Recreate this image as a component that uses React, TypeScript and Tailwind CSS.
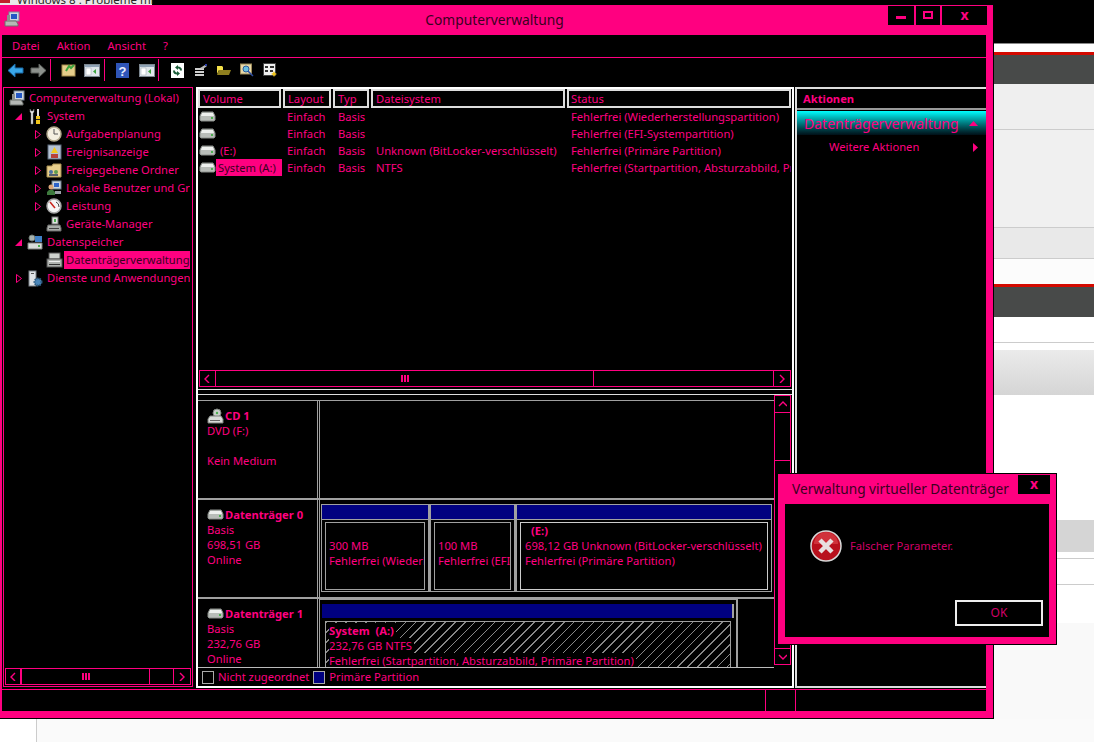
import type { ReactNode } from "react";

const font = { fontFamily: '"Noto Sans", sans-serif' };

// small hand drawn mmc icons
function DriveIcon() {
  return (
    <svg width="17" height="11" viewBox="0 0 17 11" className="shrink-0">
      <path d="M3 1h11l2 4v4l-1 1H2L1 9V5z" fill="#b9bdb9" stroke="#8a8e8a" />
      <path d="M3 2h11l1 3H2z" fill="#eef0ee" />
      <rect x="12" y="6" width="2" height="2" fill="#4caf50" />
    </svg>
  );
}

function ComputerIcon() {
  return (
    <svg width="16" height="16" viewBox="0 0 16 16" className="shrink-0">
      <rect x="5" y="1" width="10" height="9" fill="#cdd6e0" stroke="#7b8794" />
      <rect x="7" y="3" width="6" height="5" fill="#2457c5" />
      <path d="M1 10h11l2 3v2H1z" fill="#b5b8b5" stroke="#6d706d" />
      <rect x="3" y="4" width="3" height="6" fill="#8b8f8b" />
    </svg>
  );
}

function ToolsIcon() {
  return (
    <svg width="16" height="17" viewBox="0 0 16 17" className="shrink-0">
      <path d="M3 1v3l1 1v11h2V5l1-1V1L6 3H4z" fill="#e6e6e6" stroke="#777" strokeWidth="0.5" />
      <rect x="10" y="1" width="2" height="7" fill="#ddd" />
      <rect x="9" y="8" width="4" height="8" fill="#f0c419" />
      <rect x="9" y="11" width="4" height="1" fill="#222" />
    </svg>
  );
}

function ClockIcon() {
  return (
    <svg width="16" height="16" viewBox="0 0 16 16" className="shrink-0">
      <circle cx="8" cy="8" r="7" fill="#f4efe0" stroke="#b0a88c" strokeWidth="1.5" />
      <path d="M8 3v5h4" fill="none" stroke="#555" />
    </svg>
  );
}

function EventIcon() {
  return (
    <svg width="15" height="16" viewBox="0 0 15 16" className="shrink-0">
      <rect x="1" y="1" width="13" height="14" fill="#b4c2d4" stroke="#5d6b7d" />
      <path d="M7.5 3l3.5 6H4z" fill="#f2c81e" />
      <rect x="4" y="10" width="7" height="4" fill="#b8413a" />
    </svg>
  );
}

function ShareIcon() {
  return (
    <svg width="16" height="15" viewBox="0 0 16 15" className="shrink-0">
      <path d="M1 3h5l1-2h8v13H1z" fill="#e8cf8c" stroke="#a88f50" />
      <circle cx="5" cy="9" r="2" fill="#4a6fa5" />
      <circle cx="10" cy="9" r="2" fill="#5e9c4e" />
      <rect x="3" y="11" width="9" height="2" fill="#55606b" />
    </svg>
  );
}

function UsersIcon() {
  return (
    <svg width="16" height="16" viewBox="0 0 16 16" className="shrink-0">
      <rect x="6" y="1" width="9" height="8" fill="#c9d4e0" stroke="#6d7a88" />
      <rect x="8" y="3" width="5" height="4" fill="#2d62c9" />
      <circle cx="5" cy="7" r="2.5" fill="#d9a679" />
      <path d="M1 15v-3l2-2h4l2 2v3z" fill="#3d7a3d" />
      <rect x="9" y="11" width="6" height="3" fill="#9aa1a8" />
    </svg>
  );
}

function GaugeIcon() {
  return (
    <svg width="16" height="16" viewBox="0 0 16 16" className="shrink-0">
      <circle cx="8" cy="8" r="7" fill="#f5f5f5" stroke="#a5a5a5" strokeWidth="1.5" />
      <path d="M4 4l5 6" stroke="#c8241c" strokeWidth="1.5" />
      <path d="M10 4a5 5 0 0 1 3 5" stroke="#444" fill="none" />
    </svg>
  );
}

function DeviceIcon() {
  return (
    <svg width="16" height="16" viewBox="0 0 16 16" className="shrink-0">
      <rect x="6" y="1" width="6" height="7" fill="#dfe3df" stroke="#777" />
      <rect x="8" y="3" width="2" height="3" fill="#4caf50" />
      <path d="M2 9h12l1 3v3H1v-3z" fill="#a9aca9" stroke="#666" />
      <rect x="3" y="12" width="10" height="1" fill="#444" />
    </svg>
  );
}

function StorageIcon() {
  return (
    <svg width="16" height="16" viewBox="0 0 16 16" className="shrink-0">
      <circle cx="5" cy="4" r="3" fill="#a8b2ad" stroke="#6f7a75" />
      <rect x="8" y="2" width="7" height="6" fill="#3f80c6" />
      <path d="M1 9h14v6H1z" fill="#d8dcd8" stroke="#7c807c" />
      <rect x="11" y="11" width="2" height="2" fill="#4caf50" />
    </svg>
  );
}

function DiskMgmtIcon() {
  return (
    <svg width="17" height="16" viewBox="0 0 17 16" className="shrink-0">
      <rect x="3" y="1" width="11" height="6" fill="#cfd3cf" stroke="#555" />
      <rect x="1" y="7" width="15" height="8" fill="#aeb2ae" stroke="#555" />
      <rect x="3" y="9" width="11" height="1" fill="#eee" />
      <rect x="3" y="12" width="11" height="1" fill="#333" />
    </svg>
  );
}

function ServicesIcon() {
  return (
    <svg width="16" height="17" viewBox="0 0 16 17" className="shrink-0">
      <rect x="2" y="1" width="7" height="15" fill="#dfe3e6" stroke="#7b8288" />
      <rect x="4" y="3" width="3" height="1" fill="#555" />
      <circle cx="11" cy="12" r="3.5" fill="#4a86b8" stroke="#2d5c82" strokeDasharray="1.5 1" strokeWidth="2" />
    </svg>
  );
}

function CdIcon() {
  return (
    <svg width="17" height="16" viewBox="0 0 17 16" className="shrink-0">
      <circle cx="10" cy="5" r="4" fill="#c9cfc9" stroke="#7d827d" />
      <circle cx="10" cy="5" r="1.2" fill="#4caf50" />
      <path d="M3 8h11l2 3v4H1v-4z" fill="#d8dbd8" stroke="#7c807c" />
      <rect x="3" y="12" width="10" height="1" fill="#666" />
    </svg>
  );
}

function BackIcon() {
  return (
    <svg width="17" height="15" viewBox="0 0 17 15">
      <path d="M8 1L1 7.5 8 14v-4h8V5H8z" fill="#39a6e8" stroke="#1a6aa8" />
    </svg>
  );
}

function ForwardIcon() {
  return (
    <svg width="17" height="15" viewBox="0 0 17 15">
      <path d="M9 1l7 6.5L9 14v-4H1V5h8z" fill="#8d918d" stroke="#5f625f" />
    </svg>
  );
}

function FolderUpIcon() {
  return (
    <svg width="15" height="14" viewBox="0 0 15 14">
      <rect x="1" y="2" width="13" height="11" fill="#e6cd8a" stroke="#a58c4c" />
      <path d="M5 8l3-5 2 2 3-3" fill="none" stroke="#3da33d" strokeWidth="2" />
    </svg>
  );
}

function PanelIcon({ accent }: { accent: string }) {
  return (
    <svg width="16" height="13" viewBox="0 0 16 13">
      <rect x="0.5" y="0.5" width="15" height="12" fill="#dfe5ea" stroke="#7d8790" />
      <rect x="1" y="1" width="14" height="2" fill="#8fa2b5" />
      <rect x="2" y="4" width="5" height="7" fill="#fff" stroke="#9aa5ae" strokeWidth="0.5" />
      <path d="M12 5v5l-3-2.5z" fill={accent} />
    </svg>
  );
}

function HelpIcon() {
  return (
    <svg width="13" height="15" viewBox="0 0 13 15">
      <rect width="13" height="15" fill="#2f55b8" />
      <text x="6.5" y="12.5" textAnchor="middle" fontSize="13" fontWeight="700" fill="#e8eefc" fontFamily="Liberation Sans">?</text>
    </svg>
  );
}

function RefreshIcon() {
  return (
    <svg width="13" height="15" viewBox="0 0 13 15">
      <rect width="13" height="15" fill="#fff" />
      <path d="M7 2L4 4.5 7 7V5.5c1 0 2 .5 2 2h2c0-3-2-4-4-4zM6 13l3-2.5L6 8v1.5c-1 0-2-.5-2-2H2c0 3 2 4 4 4z" fill="#1c5e3a" />
    </svg>
  );
}

function PropsIcon() {
  return (
    <svg width="15" height="13" viewBox="0 0 15 13">
      <path d="M2 5h9M2 8h9M2 11h9" stroke="#cfcfcf" strokeWidth="2" />
      <path d="M7 4l5-3 2 1-4 3z" fill="#b9b9b9" />
      <rect x="12" y="0" width="2" height="2" fill="#2a3ea8" />
    </svg>
  );
}

function OpenFolderIcon() {
  return (
    <svg width="14" height="10" viewBox="0 0 14 10">
      <path d="M0 1h5l1 1v3H2L0 9z" fill="#f4e04a" />
      <path d="M2 5h12l-2 5H0z" fill="#8f7f1f" />
    </svg>
  );
}

function SearchIcon() {
  return (
    <svg width="14" height="14" viewBox="0 0 14 14">
      <rect x="0.5" y="1" width="11" height="10" fill="#e8d8a8" stroke="#9c8a58" />
      <circle cx="6" cy="6" r="3" fill="#6cc0e0" stroke="#2b5c9a" />
      <path d="M8 8l5 5" stroke="#2b4ca0" strokeWidth="1.5" />
    </svg>
  );
}

function WizardIcon() {
  return (
    <svg width="15" height="15" viewBox="0 0 15 15">
      <rect x="0.5" y="0.5" width="12" height="12" fill="#f0f0f0" stroke="#444" />
      <path d="M2 3h3v2H2zM7 3h4v2H7zM2 7h3v2H2zM7 7h3v2H7z" fill="#333" />
      <path d="M11 8l1 2 2 1-2 1-1 2-1-2-2-1 2-1z" fill="#f0c419" />
    </svg>
  );
}

function ErrorIcon() {
  return (
    <svg width="32" height="32" viewBox="0 0 32 32" className="shrink-0">
      <circle cx="16" cy="16" r="15" fill="#b8101c" stroke="#d8d8d8" strokeWidth="1.5" />
      <path d="M4 14a12 12 0 0 1 24 0z" fill="#e04a50" opacity="0.6" />
      <path d="M10 10l12 12M22 10L10 22" stroke="#e8e0e0" strokeWidth="4.5" />
    </svg>
  );
}

function Collapse() {
  return (
    <svg width="7" height="7" viewBox="0 0 7 7" className="shrink-0">
      <path d="M0 7h7V0z" fill="#ff0080" />
    </svg>
  );
}

function Expand() {
  return (
    <svg width="6" height="9" viewBox="0 0 6 9" className="shrink-0">
      <path d="M.5.5v8l5-4z" fill="none" stroke="#ff0080" />
    </svg>
  );
}

function Chevron({ dir }: { dir: "l" | "r" | "u" | "d" }) {
  const d = { l: "M6 1L2 5l4 4", r: "M2 1l4 4-4 4", u: "M1 6l4-4 4 4", d: "M1 3l4 4 4-4" }[dir];
  return (
    <svg width="9" height="9" viewBox="0 0 9 9" className="shrink-0">
      <path d={d} fill="none" stroke="#ff0080" strokeWidth="1.4" />
    </svg>
  );
}

function Grip() {
  return (
    <span className="flex gap-px">
      <span className="w-[2px] h-[7px] bg-[#ff0080]" />
      <span className="w-[2px] h-[7px] bg-[#ff0080]" />
      <span className="w-[2px] h-[7px] bg-[#ff0080]" />
    </span>
  );
}

function TreeRow(props: {
  indent: string;
  toggle?: "open" | "closed";
  icon: ReactNode;
  label: string;
  selected?: boolean;
}) {
  return (
    <div className={`flex items-center h-[18px] ${props.indent}`}>
      <span className="w-[15px] flex justify-center shrink-0">
        {props.toggle === "open" && <Collapse />}
        {props.toggle === "closed" && <Expand />}
      </span>
      <span className="w-[18px] flex justify-center shrink-0">{props.icon}</span>
      <span
        className={`ml-[1px] pl-[2px] whitespace-nowrap flex-1 overflow-hidden leading-[18px] ${
          props.selected ? "bg-[#ff0080] text-[#3a0020]" : ""
        }`}
      >
        {props.label}
      </span>
    </div>
  );
}

const cols = "grid grid-cols-[85px_50px_38px_196px_224px]";

const volumes = [
  { name: "", fs: "", status: "Fehlerfrei (Wiederherstellungspartition)" },
  { name: "", fs: "", status: "Fehlerfrei (EFI-Systempartition)" },
  { name: "(E:)", fs: "Unknown (BitLocker-verschlüsselt)", status: "Fehlerfrei (Primäre Partition)" },
  { name: "System (A:)", fs: "NTFS", status: "Fehlerfrei (Startpartition, Absturzabbild, Primäre Partition)", selected: true },
];

function Partition(props: { width: string; size: string; status: string }) {
  return (
    <div className={`${props.width} shrink-0 h-[88px] border border-[#a0a0a0] border-r-2 flex flex-col`}>
      <div className="h-[14px] bg-[#000080] shrink-0" />
      <div className="h-px bg-[#a0a0a0] shrink-0" />
      <div className="mx-[3px] mt-[2px] h-[68px] border border-[#a0a0a0] pl-[3px] pt-[15px] overflow-hidden whitespace-nowrap leading-[15px]">
        <div>{props.size}</div>
        <div>{props.status}</div>
      </div>
    </div>
  );
}

function DiskLabel(props: { icon: ReactNode; title: string; lines: string[]; h: string }) {
  return (
    <div className={`w-[120px] shrink-0 ${props.h} border-r border-r-[#a0a0a0] pl-[9px] pt-[7px] overflow-hidden leading-[15px]`}>
      <div className="flex items-center gap-px font-bold h-[15px] whitespace-nowrap">
        {props.icon}
        {props.title}
      </div>
      {props.lines.map((l, i) => (
        <div key={i} className="h-[15px]">
          {l}
        </div>
      ))}
    </div>
  );
}

export default function App() {
  return (
    <div className="relative w-[1094px] h-[742px] overflow-hidden bg-white text-[11.2px] text-[#ff0080]" style={font}>
      {/* page behind the windows */}
      <div className="h-[5px] flex bg-black overflow-hidden">
        <div className="w-[152px] h-[5px] flex bg-[#e8e8e8] text-[#222] text-[11.5px] leading-[5px] shrink-0">
          <span className="w-[10px] h-[3px] bg-[#c0202a] shrink-0" />
          <span className="ml-[7px] -translate-y-[3px] whitespace-nowrap">Windows 8 : Probleme mi</span>
        </div>
      </div>
      <div className="ml-[994px] flex flex-col">
        <div className="h-[38px] bg-black" />
        <div className="h-px bg-[#888]" />
        <div className="h-[8px] bg-white" />
        <div className="h-[3px] bg-[#d40a00]" />
        <div className="h-[29px] bg-[#484a49]" />
        <div className="h-[45px] bg-[#efefef]" />
        <div className="h-px bg-[#ccc]" />
        <div className="h-[97px] bg-[#f0f0f0]" />
        <div className="h-px bg-[#ccc]" />
        <div className="h-[30px] bg-[#e9e9e9]" />
        <div className="h-px bg-[#ccc]" />
        <div className="h-[25px] bg-[#fcfcfc]" />
        <div className="h-[3px] bg-[#d40a00]" />
        <div className="h-[30px] bg-[#484a49]" />
        <div className="h-[25px] bg-white" />
        <div className="h-px bg-[#ccc]" />
        <div className="h-[7px] bg-white" />
        <div className="h-[45px] bg-gradient-to-b from-[#ebebeb] to-[#d5d5d5]" />
        <div className="h-[125px] bg-white" />
        <div className="h-[32px] bg-[#d5d5d5]" />
        <div className="h-[6px] bg-white" />
        <div className="h-px bg-[#ccc]" />
        <div className="h-[25px] bg-white" />
        <div className="h-px bg-[#ccc]" />
        <div className="h-[38px] bg-white" />
        <div className="h-[119px] bg-[#f9f9f9]" />
      </div>
      <div className="absolute left-[36px] top-[719px] bottom-0 right-0 bg-[#fafafa] border-l border-l-[#ccc]" />

      {/* Computerverwaltung window */}
      <div className="absolute left-0 top-[5px] w-[994px] h-[714px] bg-[#ff0080] border-r border-b border-black flex flex-col">
        <div className="h-[30px] shrink-0 flex items-start relative">
          <span className="absolute left-[4px] top-[6px]">
            <ComputerIcon />
          </span>
          <span className="flex-1 text-center text-[13.8px] leading-[30px] text-[#3a0020] ml-[101px]">Computerverwaltung</span>
          <div className="flex gap-[2px] mt-px mr-[6px]">
            <span className="w-[26px] h-[19px] bg-black flex items-center justify-center">
              <span className="w-[10px] h-[3px] bg-[#ff0080] mt-[4px]" />
            </span>
            <span className="w-[24px] h-[19px] bg-black flex items-center justify-center">
              <span className="w-[10px] h-[8px] border-2 border-[#ff0080] -mt-[1px]" />
            </span>
            <span className="w-[45px] h-[19px] bg-black flex items-center justify-center font-bold text-[14px] leading-none pb-[2px]">x</span>
          </div>
        </div>

        <div className="mx-[2px] mr-[7px] h-[22px] shrink-0 bg-black flex items-center pl-[10px] gap-[17px]">
          <span>Datei</span>
          <span>Aktion</span>
          <span>Ansicht</span>
          <span>?</span>
        </div>
        <div className="h-px shrink-0" />
        <div className="mx-[2px] mr-[7px] h-[29px] shrink-0 bg-black flex items-start pt-[1px]">
          <div className="w-[49px] h-[22px] flex items-center gap-[6px] pl-[5px] border-r border-r-[#ff0080]">
            <BackIcon />
            <ForwardIcon />
          </div>
          <div className="w-[54px] h-[22px] flex items-center gap-[8px] pl-[10px] border-r border-r-[#ff0080]">
            <FolderUpIcon />
            <PanelIcon accent="#3da33d" />
          </div>
          <div className="w-[54px] h-[22px] flex items-center gap-[10px] pl-[11px] border-r border-r-[#ff0080]">
            <HelpIcon />
            <PanelIcon accent="#3da33d" />
          </div>
          <div className="h-[22px] flex items-center gap-[9px] pl-[12px]">
            <RefreshIcon />
            <PropsIcon />
            <OpenFolderIcon />
            <SearchIcon />
            <WizardIcon />
          </div>
        </div>

        <div className="mx-[2px] mr-[7px] flex-1 min-h-0 bg-black flex">
          {/* tree */}
          <div className="w-[190px] shrink-0 ml-px h-[600px] border border-[#ff0080] flex flex-col">
            <div className="flex-1 min-h-0 pt-[1px] overflow-hidden pr-[2px]">
              <TreeRow indent="-ml-[11px]" icon={<ComputerIcon />} label="Computerverwaltung (Lokal)" />
              <TreeRow indent="ml-[7px]" toggle="open" icon={<ToolsIcon />} label="System" />
              <TreeRow indent="ml-[26px]" toggle="closed" icon={<ClockIcon />} label="Aufgabenplanung" />
              <TreeRow indent="ml-[26px]" toggle="closed" icon={<EventIcon />} label="Ereignisanzeige" />
              <TreeRow indent="ml-[26px]" toggle="closed" icon={<ShareIcon />} label="Freigegebene Ordner" />
              <TreeRow indent="ml-[26px]" toggle="closed" icon={<UsersIcon />} label="Lokale Benutzer und Gruppen" />
              <TreeRow indent="ml-[26px]" toggle="closed" icon={<GaugeIcon />} label="Leistung" />
              <TreeRow indent="ml-[26px]" icon={<DeviceIcon />} label="Geräte-Manager" />
              <TreeRow indent="ml-[7px]" toggle="open" icon={<StorageIcon />} label="Datenspeicher" />
              <TreeRow indent="ml-[26px]" icon={<DiskMgmtIcon />} label="Datenträgerverwaltung" selected />
              <TreeRow indent="ml-[7px]" toggle="closed" icon={<ServicesIcon />} label="Dienste und Anwendungen" />
            </div>
            <div className="mx-px mb-px h-[17px] shrink-0 border border-[#ff0080] flex">
              <span className="w-[16px] flex items-center justify-center border-r-2 border-r-[#ff0080]">
                <Chevron dir="l" />
              </span>
              <span className="w-[128px] flex items-center justify-center border-r border-r-[#ff0080]">
                <Grip />
              </span>
              <span className="flex-1 border-r border-r-[#ff0080]" />
              <span className="w-[16px] flex items-center justify-center">
                <Chevron dir="r" />
              </span>
            </div>
          </div>

          {/* center */}
          <div className="ml-[3px] w-[598px] shrink-0 h-[601px] border-2 border-white flex flex-col">
            <div className="h-[281px] shrink-0 flex flex-col overflow-hidden">
              <div className={`${cols} h-[18px] shrink-0 leading-[15px]`}>
                <div className="border-2 border-[#ddd] pl-[3px] mr-[2px]">Volume</div>
                <div className="border-2 border-[#ddd] pl-[3px] mr-[2px]">Layout</div>
                <div className="border-2 border-[#ddd] pl-[3px] mr-[2px]">Typ</div>
                <div className="border-2 border-[#ddd] pl-[3px] mr-[2px]">Dateisystem</div>
                <div className="border-2 border-[#ddd] pl-[2px]">Status</div>
              </div>
              <div className="flex-1 pt-[1px] min-h-0">
                {volumes.map((v, i) => (
                  <div key={i} className={`${cols} h-[17px] items-center leading-[17px] whitespace-nowrap`}>
                    <div className="flex items-center pl-px">
                      <DriveIcon />
                      {v.selected ? (
                        <span className="w-[66px] pl-[2px] bg-[#ff0080] text-[#3a0020]">{v.name}</span>
                      ) : (
                        <span className="pl-[4px]">{v.name}</span>
                      )}
                    </div>
                    <div className="pl-[4px]">Einfach</div>
                    <div className="pl-[5px]">Basis</div>
                    <div className="pl-[5px]">{v.fs}</div>
                    <div className="pl-[4px] overflow-hidden">{v.status}</div>
                  </div>
                ))}
              </div>
            </div>
            <div className="mx-px h-[17px] shrink-0 border border-[#ff0080] flex">
              <span className="w-[16px] flex items-center justify-center border-r border-r-[#ff0080]">
                <Chevron dir="l" />
              </span>
              <span className="w-[378px] flex items-center justify-center border-r border-r-[#ff0080]">
                <Grip />
              </span>
              <span className="flex-1 border-r border-r-[#ff0080]" />
              <span className="w-[16px] flex items-center justify-center">
                <Chevron dir="r" />
              </span>
            </div>
            <div className="h-[6px] shrink-0 border-t border-b border-[#ddd] mt-[2px]" />

            <div className="flex-1 min-h-0 flex">
              <div className="flex-1 min-w-0 flex flex-col overflow-hidden">
                <div className="h-[5px] shrink-0" />
                <div className="flex border-t border-t-[#a0a0a0] shrink-0">
                  <DiskLabel h="h-[97px]" icon={<CdIcon />} title="CD 1" lines={["DVD (F:)", "", "Kein Medium"]} />
                  <div className="ml-px flex-1 border-l border-l-[#a0a0a0]" />
                </div>
                <div className="flex border-t-2 border-t-[#a0a0a0] shrink-0">
                  <DiskLabel h="h-[97px]" icon={<DriveIcon />} title="Datenträger 0" lines={["Basis", "698,51 GB", "Online"]} />
                  <div className="ml-px flex-1 border-l border-l-[#a0a0a0] pt-[4px] pl-px flex">
                    <Partition width="w-[109px]" size="300 MB" status="Fehlerfrei (Wiederherstellungspartition)" />
                    <Partition width="w-[86px]" size="100 MB" status="Fehlerfrei (EFI-Systempartition)" />
                    <div className="w-[256px] shrink-0 h-[88px] border border-[#a0a0a0] flex flex-col">
                      <div className="h-[14px] bg-[#000080] shrink-0" />
                      <div className="h-px bg-[#a0a0a0] shrink-0" />
                      <div className="mx-[3px] mt-[2px] h-[68px] border border-[#ccc] pl-[4px] overflow-hidden whitespace-nowrap leading-[15px]">
                        <div className="font-bold pl-[6px]">(E:)</div>
                        <div>698,12 GB Unknown (BitLocker-verschlüsselt)</div>
                        <div>Fehlerfrei (Primäre Partition)</div>
                      </div>
                    </div>
                  </div>
                </div>
                <div className="flex border-t-2 border-t-[#a0a0a0] flex-1 min-h-0">
                  <DiskLabel h="h-[68px]" icon={<DriveIcon />} title="Datenträger 1" lines={["Basis", "232,76 GB", "Online"]} />
                  <div className="ml-px flex-1 border-l border-l-[#a0a0a0] min-w-0">
                    <div className="w-[418px] h-[68px] overflow-hidden border-r-2 border-t border-[#a0a0a0] pt-[4px] pl-[2px] pr-[2px]">
                      <div className="h-[14px] bg-[#000080] border-r-2 border-r-[#a0a0a0]" />
                      <div className="mt-[3px] mx-[3px] h-[50px] border border-[#a0a0a0] bg-[repeating-linear-gradient(135deg,#888_0_1px,#000_1px_7px)] pl-[3px] pt-px leading-[15px] whitespace-nowrap overflow-hidden">
                        <div className="font-bold bg-black w-fit pr-[2px]">System&nbsp; (A:)</div>
                        <div className="bg-black w-fit pr-[2px]">232,76 GB NTFS</div>
                        <div className="bg-black w-fit pr-[2px]">Fehlerfrei (Startpartition, Absturzabbild, Primäre Partition)</div>
                      </div>
                    </div>
                  </div>
                </div>
                <div className="h-[19px] shrink-0 border-t border-t-[#bbb] flex items-center pl-[4px] whitespace-nowrap">
                  <span className="w-[12px] h-[13px] border border-[#aaa] shrink-0" />
                  <span className="ml-[4px]">Nicht zugeordnet</span>
                  <span className="ml-[4px] w-[12px] h-[13px] border border-[#aaa] bg-[#000080] shrink-0" />
                  <span className="ml-[4px]">Primäre Partition</span>
                </div>
              </div>
              <div className="w-[17px] shrink-0 h-[270px] mr-px flex flex-col border border-[#ff0080]">
                <span className="h-[16px] flex items-center justify-center shrink-0">
                  <Chevron dir="u" />
                </span>
                <span className="h-[49px] border-y border-y-[#ff0080] shrink-0" />
                <span className="flex-1 border-b border-b-[#ff0080]" />
                <span className="h-[15px] flex items-center justify-center shrink-0">
                  <Chevron dir="d" />
                </span>
              </div>
            </div>
          </div>

          {/* actions */}
          <div className="ml-[1px] flex-1 min-w-0 h-[601px] border-2 border-[#ddd] border-r-0 flex flex-col">
            <div className="h-[21px] pt-px shrink-0 flex items-center pl-[6px] font-bold border-b-2 border-b-[#999]">Aktionen</div>
            <div className="h-[24px] shrink-0 mt-px bg-gradient-to-b from-[#00ffff] to-[#001018] flex items-center pl-[7px] pr-[8px] justify-between text-[14px] whitespace-nowrap">
              <span>Datenträgerverwaltung</span>
              <svg width="9" height="5" viewBox="0 0 9 5">
                <path d="M0 5L4.5 0 9 5z" fill="#ff0080" />
              </svg>
            </div>
            <div className="h-[25px] shrink-0 flex items-center justify-between pl-[32px] pr-[8px]">
              <span>Weitere Aktionen</span>
              <svg width="5" height="9" viewBox="0 0 5 9">
                <path d="M0 0l5 4.5L0 9z" fill="#ff0080" />
              </svg>
            </div>
          </div>
        </div>

        <div className="h-px shrink-0" />
        <div className="mx-[2px] mr-[7px] h-[21px] shrink-0 bg-black flex justify-end">
          <span className="w-[30px] border-l border-l-[#ff0080]" />
          <span className="w-[191px] border-l border-l-[#ff0080]" />
        </div>
        <div className="h-[7px] shrink-0" />
      </div>

      {/* error dialog */}
      <div className="absolute left-[777px] top-[473px] w-[280px] h-[172px] bg-[#ff0080] border border-black flex flex-col">
        <div className="h-[30px] shrink-0 flex items-start">
          <span className="ml-[14px] flex-1 text-[13.7px] leading-[30px] text-[#3a0020] whitespace-nowrap">Verwaltung virtueller Datenträger</span>
          <span className="w-[32px] h-[19px] shrink-0 mt-px mr-[6px] bg-black flex items-center justify-center font-bold text-[14px] leading-none pb-[2px]">x</span>
        </div>
        <div className="mx-[7px] h-[133px] bg-black flex flex-col">
          <div className="flex items-center pl-[25px] pt-[26px]">
            <ErrorIcon />
            <span className="ml-[8px] text-[#d00068]">Falscher Parameter.</span>
          </div>
          <div className="flex justify-end pr-[6px] mt-[38px]">
            <button className="w-[88px] h-[26px] border-2 border-[#eee] text-[#d00068] text-[12px]" style={font}>
              OK
            </button>
          </div>
        </div>
      </div>
    </div>
  );
}
